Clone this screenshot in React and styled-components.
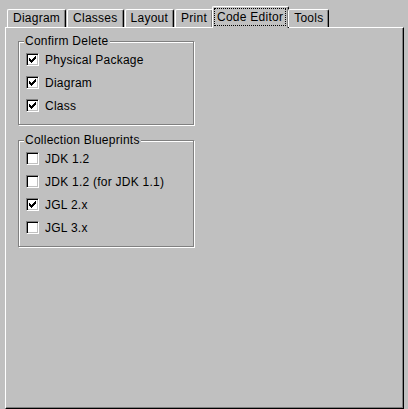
import React, { useState } from "react";
import styled, { createGlobalStyle } from "styled-components";

const GlobalStyle = createGlobalStyle`
  html, body {
    margin: 0;
    padding: 0;
    background: #c0c0c0;
  }
  body {
    font-family: "Liberation Sans", Arial, sans-serif;
    font-size: 12px;
    letter-spacing: 0.25px;
    color: #000;
  }
`;

const Window = styled.div`
  width: 408px;
  height: 409px;
  background: #c0c0c0;
  overflow: hidden;
`;

const TabStrip = styled.div`
  display: flex;
  align-items: flex-end;
  gap: 1px;
  height: 27px;
  padding-left: 7px;
  position: relative;
  z-index: 1;
`;

const Tab = styled.div`
  box-sizing: border-box;
  height: 18px;
  line-height: 17px;
  padding: 0 5px;
  background: #c0c0c0;
  border-top: 1px solid #fff;
  border-left: 1px solid #fff;
  border-right: 1px solid #000;
  border-radius: 2px 2px 0 0;
  box-shadow: inset -1px 0 0 #808080;
  white-space: nowrap;
  cursor: default;
`;

const ActiveTab = styled(Tab)`
  height: 22px;
  line-height: normal;
  padding: 1px 2px 2px 1px;
  margin: 0 -2px -1px;
`;

const Focus = styled.span`
  display: block;
  border: 1px dotted #000;
  padding: 0 2px;
  line-height: 16px;
`;

const Panel = styled.div`
  box-sizing: border-box;
  margin-left: 5px;
  width: 399px;
  height: 382px;
  border-top: 1px solid #fff;
  border-left: 1px solid #fff;
  border-right: 1px solid #000;
  border-bottom: 1px solid #000;
  box-shadow: inset -1px -1px 0 #808080;
  padding: 7px 0 0 12px;
  display: flex;
  flex-direction: column;
  align-items: flex-start;
  gap: 9px;
`;

const Group = styled.fieldset`
  box-sizing: border-box;
  width: 176px;
  margin: 0;
  padding: 0 5px 7px;
  border: 1px solid #808080;
  box-shadow: inset 1px 1px 0 #fff, 1px 1px 0 #fff;
`;

const Legend = styled.legend`
  padding: 0 1px;
  line-height: 13px;
  background: #c0c0c0;
`;

const Row = styled.label`
  display: flex;
  align-items: center;
  height: 23px;
  cursor: default;
`;

const Box = styled.span`
  box-sizing: border-box;
  width: 13px;
  height: 13px;
  margin-left: 2px;
  margin-right: 6px;
  background: #fff;
  border-top: 1px solid #808080;
  border-left: 1px solid #808080;
  border-right: 1px solid #fff;
  border-bottom: 1px solid #fff;
  box-shadow: inset 1px 1px 0 #000, inset -1px -1px 0 #c0c0c0;
  display: flex;
  align-items: center;
  justify-content: center;
`;

const tabs = ["Diagram", "Classes", "Layout", "Print", "Code Editor", "Tools"];

const groups = [
  {
    title: "Confirm Delete",
    items: [
      { label: "Physical Package", on: true },
      { label: "Diagram", on: true },
      { label: "Class", on: true },
    ],
  },
  {
    title: "Collection Blueprints",
    items: [
      { label: "JDK 1.2", on: false },
      { label: "JDK 1.2 (for JDK 1.1)", on: false },
      { label: "JGL 2.x", on: true },
      { label: "JGL 3.x", on: false },
    ],
  },
];

const Check = () => (
  <svg width="7" height="7" viewBox="0 0 7 7">
    <path d="M0 2h1v1h1v1h1v-1h1v-1h1v-1h1v-1h1v3h-1v1h-1v1h-1v1h-1v1h-1v-1h-1v-1h-1v-1h-1z" fill="#000" />
  </svg>
);

const CheckItem = ({ label, initial }) => {
  const [on, setOn] = useState(initial);
  return (
    <Row onClick={() => setOn(!on)}>
      <Box>{on && <Check />}</Box>
      {label}
    </Row>
  );
};

export default function App() {
  const [active, setActive] = useState("Code Editor");
  return (
    <>
      <GlobalStyle />
      <Window>
        <TabStrip>
          {tabs.map((t) =>
            t === active ? (
              <ActiveTab key={t}>
                <Focus>{t}</Focus>
              </ActiveTab>
            ) : (
              <Tab key={t} onClick={() => setActive(t)}>
                {t}
              </Tab>
            )
          )}
        </TabStrip>
        <Panel>
          {groups.map((g) => (
            <Group key={g.title}>
              <Legend>{g.title}</Legend>
              {g.items.map((it) => (
                <CheckItem key={it.label} label={it.label} initial={it.on} />
              ))}
            </Group>
          ))}
        </Panel>
      </Window>
    </>
  );
}
